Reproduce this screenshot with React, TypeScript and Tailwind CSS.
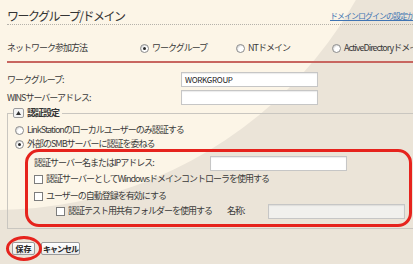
import React from "react";

function Radio({ checked = false }: { checked?: boolean }) {
  return (
    <span className="w-[9px] h-[9px] rounded-full border border-[#8a8a8a] bg-white flex items-center justify-center shrink-0 shadow-[inset_1px_1px_1px_rgba(0,0,0,0.15)]">
      {checked && <span className="w-[3px] h-[3px] rounded-full bg-[#2a2a2a]" />}
    </span>
  );
}

function Check() {
  return <span className="w-[9px] h-[9px] border border-[#7d7d7d] bg-white shrink-0" />;
}

function Field({ value = "", disabled = false, className = "" }: { value?: string; disabled?: boolean; className?: string }) {
  return (
    <div
      className={`h-[15px] border border-[#c6c6c6] shadow-[inset_0_1px_1px_rgba(0,0,0,0.08)] flex items-center px-[3px] text-[8px] tracking-[-0.3px] text-[#222] ${
        disabled ? "bg-[#f1f0ed]" : "bg-white"
      } ${className}`}
    >
      {value}
    </div>
  );
}

export default function App() {
  return (
    <div className="relative w-[413px] h-[264px] overflow-hidden bg-[#ebe4d8] text-[#3a3a3a] text-[9px] tracking-[-1px] font-['Noto_Sans_CJK_JP','Noto_Sans',sans-serif]">
      {/* cream swoosh in the background */}
      <div className="absolute left-[-420px] top-[-660px] w-[830px] h-[870px] rounded-full bg-[#fcf5e7]" />

      <div className="relative pl-[7px]">
        {/* title */}
        <div className="flex items-end pt-[9px] pb-[1px] border-b border-dotted border-[#b5b2ab]">
          <div className="w-[323px] shrink-0 text-[12px] leading-[14px] tracking-[-1.5px] text-[#333]">ワークグループ/ドメイン</div>
          <a className="whitespace-nowrap text-[8px] leading-[10px] pb-[2px] text-[#3f74b3] underline">
            ドメインログインの設定が必要な場合
          </a>
        </div>

        {/* network join */}
        <div className="mt-[15px] pb-[5px] border-b-2 border-[#c86660]">
          <div className="h-[16px] flex items-center">
            <div className="w-[133px] shrink-0">ネットワーク参加方法</div>
            <div className="w-[96px] shrink-0 flex items-center gap-[3px]">
              <Radio checked />
              <span>ワークグループ</span>
            </div>
            <div className="w-[96px] shrink-0 flex items-center gap-[3px]">
              <Radio />
              <span>NTドメイン</span>
            </div>
            <div className="shrink-0 flex items-center gap-[3px] whitespace-nowrap">
              <Radio />
              <span>ActiveDirectoryドメイン</span>
            </div>
          </div>
        </div>

        <div className="mt-[9px] h-[15px] flex items-center">
          <div className="w-[174px] shrink-0">ワークグループ:</div>
          <Field value="WORKGROUP" className="w-[137px]" />
        </div>
        <div className="mt-[3px] h-[15px] flex items-center">
          <div className="w-[174px] shrink-0">WINSサーバーアドレス:</div>
          <Field className="w-[137px]" />
        </div>

        {/* auth settings */}
        <fieldset className="mt-[2px] w-[420px] border border-[#c9c6c0] pb-[10px]">
          <legend className="ml-[5px] pr-[3px] h-[12px] flex items-center gap-[3px]">
            <span className="w-[11px] h-[10px] border border-[#9c9c9c] rounded-[2px] bg-[#f4f4f4] flex items-center justify-center">
              <svg width="5" height="4" viewBox="0 0 5 4">
                <path d="M2.5 0 L5 4 L0 4 Z" fill="#333" />
              </svg>
            </span>
            <span className="font-bold text-[#333]">認証設定</span>
          </legend>

          <div className="pl-[7px]">
            <div className="mt-[4px] h-[14px] flex items-center gap-[3px]">
              <Radio />
              <span>LinkStationのローカルユーザーのみ認証する</span>
            </div>
            <div className="h-[14px] flex items-center gap-[3px]">
              <Radio checked />
              <span>外部のSMBサーバーに認証を委ねる</span>
            </div>

            <div className="pl-[19px]">
              <div className="mt-[5px] h-[14px] flex items-center">
                <div className="w-[176px] shrink-0">認証サーバー名またはIPアドレス:</div>
                <Field className="w-[137px] h-[14px]" />
              </div>
              <div className="mt-[2px] h-[14px] flex items-center gap-[3px]">
                <Check />
                <span>認証サーバーとしてWindowsドメインコントローラを使用する</span>
              </div>
              <div className="mt-[3px] h-[14px] flex items-center gap-[3px]">
                <Check />
                <span>ユーザーの自動登録を有効にする</span>
              </div>
              <div className="mt-[1px] h-[14px] flex items-center pl-[22px]">
                <div className="w-[171px] shrink-0 flex items-center gap-[3px]">
                  <Check />
                  <span>認証テスト用共有フォルダーを使用する</span>
                </div>
                <div className="w-[41px] shrink-0">名称:</div>
                <Field disabled className="w-[137px] h-[14px]" />
              </div>
            </div>
          </div>
        </fieldset>

        {/* buttons */}
        <div className="mt-[13px] pl-[5px] flex items-center gap-[6px]">
          <button className="h-[13px] w-[23px] px-0 whitespace-nowrap border border-[#9a9a9a] rounded-[2px] bg-gradient-to-b from-white to-[#ebebeb] font-bold text-[8px] leading-none tracking-[0px] text-[#222]">
            保存
          </button>
          <button className="h-[13px] w-[39px] px-0 whitespace-nowrap border border-[#9a9a9a] rounded-[2px] bg-gradient-to-b from-white to-[#ebebeb] font-bold text-[8px] leading-none tracking-[-1px] text-[#222]">
            キャンセル
          </button>
        </div>
      </div>

      {/* red annotation marks */}
      <div className="absolute left-[25px] top-[149px] w-[387px] h-[78px] border-[3px] border-[#e6231d] rounded-[14px]" />
      <div className="absolute left-[6px] top-[236px] w-[36px] h-[25px] border-[3px] border-[#e6231d] rounded-[50%]" />
    </div>
  );
}
